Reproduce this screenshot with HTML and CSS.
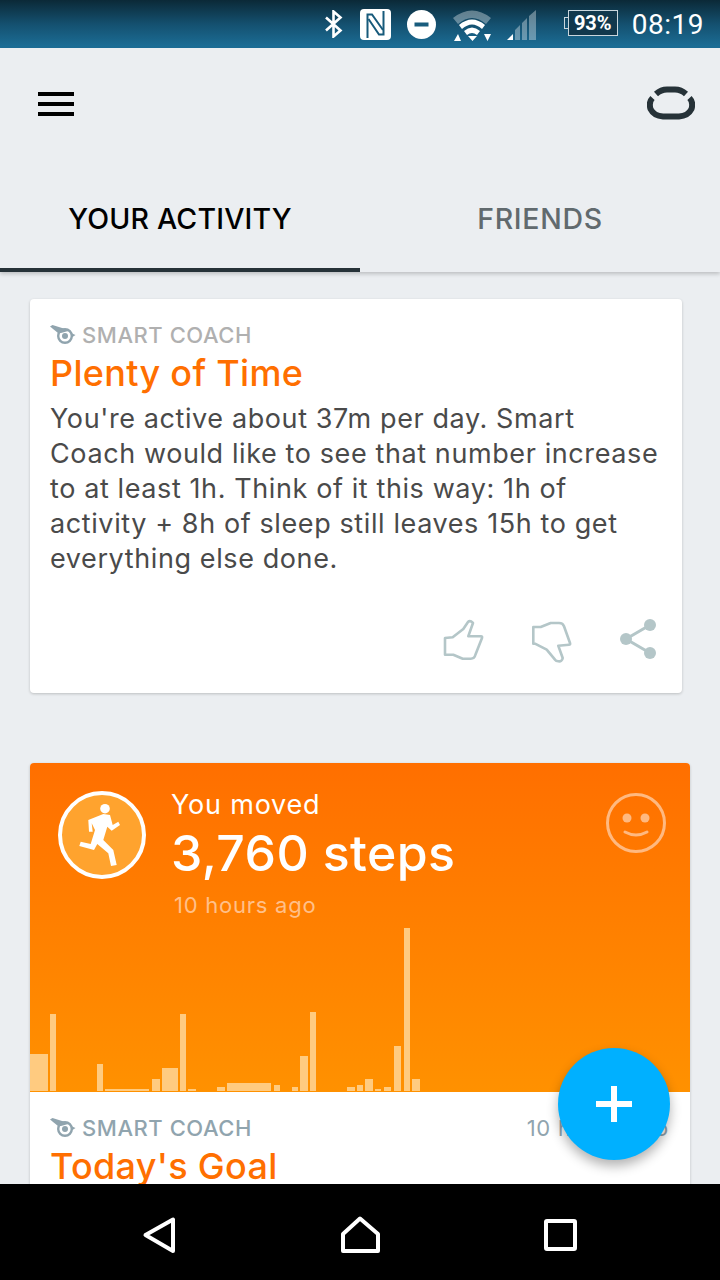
FILE: index.html
```html
<!DOCTYPE html>
<html lang="en">
<head>
  <meta charset="UTF-8">
  <meta name="viewport" content="width=device-width, initial-scale=1.0">
  <title>Your Activity</title>
  <link rel="stylesheet" href="styles.css">
</head>
<body>
  <div class="phone">
    <div class="status-bar">
      <svg class="st-bt" width="19" height="28" viewBox="0 0 19 28"><path d="M2 7.5 L16.5 20.5 L9.5 26.5 V1.5 L16.5 7.5 L2 20.5" fill="none" stroke="#fff" stroke-width="2.6"/></svg>
      <svg class="st-nfc" width="31" height="31" viewBox="0 0 31 31"><rect width="31" height="31" rx="4" fill="#fff"/><path d="M7.5 29 V5.5 H12 L23 21" fill="none" stroke="#175a7b" stroke-width="2"/><path d="M23.5 2 V25.5 H19 L8.5 10" fill="none" stroke="#175a7b" stroke-width="2"/></svg>
      <svg class="st-dnd" width="29" height="29" viewBox="0 0 29 29"><circle cx="14.5" cy="14.5" r="14.5" fill="#fff"/><rect x="7.5" y="12.5" width="14" height="4" fill="#185c7d"/></svg>
      <svg class="st-wifi" width="38" height="32" viewBox="0 0 38 32"><path d="M0 9 Q19 -6 38 9 L33 15 Q19 3 5 15 Z" fill="#fff" fill-opacity=".35"/><path d="M6 16 Q19 5 32 16 L29 20 Q19 11 9 20 Z" fill="#fff"/><path d="M11 22 Q19 15 27 22 L24 26 Q19 22 14 26 Z" fill="#fff"/><path d="M1 32 L5 25 L8 32 Z M15 27 H24 L19.5 32 Z M31 25 H38 L34.5 32 Z" fill="#fff"/></svg>
      <svg class="st-signal" width="30" height="30" viewBox="0 0 30 30"><path d="M8 30 V20 L13 15 V30 Z M15 30 V13 L20 8 V30 Z M22 30 V6 L29 0 V30 Z" fill="#fff" fill-opacity=".35"/><path d="M0 30 L6 24 V30 Z" fill="#fff"/></svg>
      <div class="battery"><span class="battery-nub"></span><span class="battery-text">93%</span></div>
      <span class="clock">08:19</span>
    </div>

    <header class="app-header">
      <div class="toolbar">
        <div class="burger"><span></span><span></span><span></span></div>
        <svg class="band" width="48" height="34" viewBox="0 0 48 34"><path d="M9 8 Q14 3.5 20 3.5 H28 Q34 3.5 39 8" fill="none" stroke="#263238" stroke-width="6"/><path d="M5.5 12 Q1.5 16 3.5 23 Q7 30 16 30.5 H32 Q41 30 44.5 23 Q46.5 16 42.5 12" fill="none" stroke="#263238" stroke-width="6"/></svg>
      </div>
      <nav class="tabs">
        <div class="tab active">YOUR ACTIVITY</div>
        <div class="tab">FRIENDS</div>
      </nav>
    </header>

    <main class="content">
      <section class="card coach-card">
        <div class="coach-label">
          <svg width="26" height="20" viewBox="0 0 26 20"><path d="M0 1.5 L2.5 0 L20 5.5 L11 8 L8 8 Z" fill="#90a4ae"/><circle cx="15" cy="11" r="6.8" fill="none" stroke="#90a4ae" stroke-width="2.4"/><circle cx="15" cy="11" r="3" fill="#90a4ae"/><path d="M21 8 L25.5 10 L21 13 Z" fill="#90a4ae"/></svg>
          <span>SMART COACH</span>
        </div>
        <h2 class="coach-title">Plenty of Time</h2>
        <p class="coach-text">You're active about 37m per day. Smart Coach would like to see that number increase to at least 1h. Think of it this way: 1h of activity + 8h of sleep still leaves 15h to get everything else done.</p>
        <div class="actions">
          <svg width="46" height="46" viewBox="0 0 46 46"><path d="M5 21 L12.7 20.3 L23.3 12 L28 5 Q30 3 33 6 L28.3 19.3 H41 Q42.5 19.3 42 21 L35.5 37.5 Q34.5 41.7 30.7 41.7 H22.7 L13.3 37.7 H5 Z" fill="none" stroke="#b4c6c8" stroke-width="2.6" stroke-linejoin="round"/></svg>
          <svg width="46" height="46" viewBox="0 0 46 46"><path d="M3.3 10 H10.7 L20.7 6 H29 Q33 6 34 9.3 L40 26 Q40.5 27.7 39 27.7 L28.3 28.7 L32.7 41 Q32 45 28.3 44.3 Q26 44 25 42.7 L16.7 32.7 L5 26.7 H3.3 Z" fill="none" stroke="#b4c6c8" stroke-width="2.6" stroke-linejoin="round"/></svg>
          <svg class="share" width="40" height="44" viewBox="0 0 40 44"><path d="M32 8 L8 22 L32 36" fill="none" stroke="#b4c6c8" stroke-width="3"/><circle cx="32" cy="8" r="6" fill="#b4c6c8"/><circle cx="8" cy="22" r="6" fill="#b4c6c8"/><circle cx="32" cy="36" r="6" fill="#b4c6c8"/></svg>
        </div>
      </section>

      <section class="card steps-card">
        <div class="steps-top">
          <div class="steps-head">
            <svg class="run-icon" width="88" height="88" viewBox="0 0 88 88">
              <circle cx="44" cy="44" r="42" fill="#ffa32e" stroke="#fff" stroke-width="4"/>
              <circle cx="47" cy="17.7" r="4.8" fill="#fff"/>
              <path d="M30.3 29 L45.3 23 L52 24 L54.7 34 L60.3 30.7 L62 34 L53.7 39.7 L49.3 35.7 L45.3 49 L55.3 59 L58.7 74 L53 75 L50.3 62.3 L39.3 53 L36 59 L21.3 55 L22.7 50.7 L32.7 53 L37 39 L33.7 32.3 L34.7 40.7 L31 40.7 Z" fill="#fff"/>
            </svg>
            <div class="steps-text">
              <div class="steps-intro">You moved</div>
              <div class="steps-count">3,760 steps</div>
              <div class="steps-time">10 hours ago</div>
            </div>
            <svg class="smiley" width="60" height="60" viewBox="0 0 60 60">
              <circle cx="30" cy="30" r="28.5" fill="none" stroke="#ffb980" stroke-width="3"/>
              <circle cx="21" cy="25" r="4.5" fill="#ffb980"/>
              <circle cx="39" cy="25" r="4.5" fill="#ffb980"/>
              <path d="M19 39 Q30 45 41 39" fill="none" stroke="#ffb980" stroke-width="3" stroke-linecap="round"/>
            </svg>
          </div>
          <svg class="chart" width="660" height="170" viewBox="0 0 660 170">
            <g fill="#ffcb80">
              <rect x="0" y="132" width="18" height="37"/>
              <rect x="20" y="92" width="6" height="77"/>
              <rect x="67" y="142" width="6" height="27"/>
              <rect x="75" y="167" width="44" height="2"/>
              <rect x="122" y="157" width="8" height="12"/>
              <rect x="132" y="146" width="16" height="23"/>
              <rect x="150" y="92" width="6" height="77"/>
              <rect x="158" y="167" width="8" height="2"/>
              <rect x="187" y="165" width="8" height="4"/>
              <rect x="197" y="161" width="44" height="8"/>
              <rect x="244" y="163" width="6" height="6"/>
              <rect x="262" y="165" width="6" height="4"/>
              <rect x="270" y="134" width="8" height="35"/>
              <rect x="280" y="90" width="6" height="79"/>
              <rect x="317" y="165" width="8" height="4"/>
              <rect x="327" y="163" width="6" height="6"/>
              <rect x="335" y="157" width="8" height="12"/>
              <rect x="345" y="167" width="6" height="2"/>
              <rect x="354" y="165" width="7" height="4"/>
              <rect x="364" y="124" width="7" height="45"/>
              <rect x="374" y="6" width="6" height="163"/>
              <rect x="382" y="157" width="8" height="12"/>
            </g>
          </svg>
        </div>
        <div class="steps-bottom">
          <div class="coach-label label-dark">
            <svg width="26" height="20" viewBox="0 0 26 20"><path d="M0 1.5 L2.5 0 L20 5.5 L11 8 L8 8 Z" fill="#90a4ae"/><circle cx="15" cy="11" r="6.8" fill="none" stroke="#90a4ae" stroke-width="2.4"/><circle cx="15" cy="11" r="3" fill="#90a4ae"/><path d="M21 8 L25.5 10 L21 13 Z" fill="#90a4ae"/></svg>
            <span>SMART COACH</span>
            <span class="coach-time">10 hours ago</span>
          </div>
          <h2 class="coach-title">Today's Goal</h2>
        </div>
      </section>

      <button class="fab"><svg width="36" height="36" viewBox="0 0 36 36"><path d="M18 0 V36 M0 18 H36" stroke="#fff" stroke-width="6"/></svg></button>
    </main>

    <footer class="nav-bar">
      <svg width="40" height="44" viewBox="0 0 40 44"><path d="M5.5 21 L33 5.5 V37 Z" fill="none" stroke="#fff" stroke-width="4" stroke-linejoin="round"/></svg>
      <svg width="40" height="44" viewBox="0 0 40 44"><path d="M20 4.5 L38 20 V37 H3 V20 Z" fill="none" stroke="#fff" stroke-width="4" stroke-linejoin="round"/></svg>
      <svg width="40" height="44" viewBox="0 0 40 44"><rect x="6" y="7" width="29" height="28" rx="1" fill="none" stroke="#fff" stroke-width="4"/></svg>
    </footer>
  </div>
</body>
</html>
```

FILE: styles.css
```css
/* General */
* {
  box-sizing: border-box;
}

body {
  margin: 0;
  font-family: Inter, 'Open Sans', sans-serif;
  background-color: #ebeef1;
}

.phone {
  width: 720px;
  height: 1280px;
  display: flex;
  flex-direction: column;
  overflow: hidden;
}

/* Status bar */
.status-bar {
  height: 48px;
  flex-shrink: 0;
  display: flex;
  align-items: center;
  padding-right: 16px;
  justify-content: flex-end;
  background: linear-gradient(#0b2937, #14506f 50%, #1c6f98);
  font-family: Roboto, sans-serif;
  color: #fff;
}

.st-bt {
  margin-right: 17px;
}

.st-nfc {
  margin-right: 16px;
}

.st-dnd {
  margin-right: 17px;
}

.st-wifi {
  margin-right: 16px;
  margin-top: 2px;
}

.st-signal {
  margin-right: 31px;
  margin-top: 2px;
}

.battery {
  position: relative;
  width: 50px;
  height: 26px;
  margin-right: 14px;
  margin-top: -3px;
  border: 1px solid #c9d6dd;
  background-color: #11384d;
  display: flex;
  align-items: center;
  justify-content: center;
}

.battery-nub {
  position: absolute;
  left: -5px;
  top: 6px;
  width: 4px;
  height: 12px;
  border: 1px solid #c9d6dd;
  border-right: none;
}

.battery-text {
  font-size: 20px;
  font-weight: 700;
}

.clock {
  font-size: 28px;
  letter-spacing: 0.5px;
}

/* Header */
.app-header {
  flex-shrink: 0;
  position: relative;
  z-index: 1;
  background-color: #ebeef1;
  box-shadow: 0 2px 4px rgba(0, 0, 0, 0.2);
}

.toolbar {
  height: 112px;
  display: flex;
  align-items: center;
  justify-content: space-between;
  padding: 0 25px 0 38px;
}

.burger {
  width: 36px;
  display: flex;
  flex-direction: column;
  gap: 6px;
  margin-top: -1px;
}

.burger span {
  height: 4px;
  background-color: #000;
}

.band {
  margin-top: -2px;
}

.tabs {
  height: 112px;
  display: flex;
}

.tab {
  width: 360px;
  padding-top: 43px;
  text-align: center;
  font-size: 28.5px;
  line-height: 32px;
  font-weight: 500;
  letter-spacing: 0.7px;
  color: #616a6e;
  border-bottom: 4px solid transparent;
}

.tab.active {
  color: #000;
  letter-spacing: 0.2px;
  border-bottom-color: #263238;
}

/* Cards */
.content {
  position: relative;
  flex: 1;
  min-height: 0;
  overflow: hidden;
  padding: 27px 30px 0;
}

.card {
  background-color: #fff;
  border-radius: 4px;
  box-shadow: 0 1px 3px rgba(0, 0, 0, 0.2);
}

.coach-card {
  width: 652px;
  height: 394px;
  padding: 24px 20px 30px 20px;
  margin-bottom: 70px;
  display: flex;
  flex-direction: column;
}

.coach-label {
  display: flex;
  align-items: center;
  gap: 6px;
  height: 24px;
  font-size: 22px;
  letter-spacing: 0.55px;
  font-weight: 500;
  color: #b0b0b0;
}

.label-dark {
  color: #90a4ae;
}

.coach-time {
  margin-left: auto;
  font-weight: 400;
  letter-spacing: 0.75px;
}

.coach-title {
  margin: 5px 0 0 0;
  font-size: 36px;
  line-height: 42px;
  letter-spacing: 0.3px;
  font-weight: 500;
  color: #ff6f00;
}

.coach-text {
  margin: 7px 0 0 0;
  font-size: 27px;
  line-height: 35px;
  letter-spacing: 0.6px;
  color: #4a4a4a;
}

.actions {
  display: flex;
  justify-content: flex-end;
  gap: 44px;
  margin-top: auto;
  margin-right: 4px;
}

.share {
  margin-left: -2px;
}

.steps-card {
  width: 660px;
}

.steps-top {
  height: 329px;
  display: flex;
  flex-direction: column;
  justify-content: space-between;
  border-radius: 4px 4px 0 0;
  background: linear-gradient(#ff6f00, #ff9100);
}

.steps-head {
  display: flex;
  padding: 28px 24px 0 28px;
}

.steps-text {
  margin-left: 25px;
  margin-top: -3px;
}

.steps-intro {
  font-size: 27px;
  line-height: 34px;
  letter-spacing: 0.8px;
  color: #fff;
}

.steps-count {
  font-size: 50px;
  line-height: 62px;
  letter-spacing: 0.4px;
  font-weight: 500;
  color: #fff;
}

.steps-time {
  margin: 6px 0 0 3px;
  font-size: 22px;
  line-height: 30px;
  letter-spacing: 0.75px;
  color: #ffc08a;
}

.smiley {
  margin-left: auto;
  margin-top: 2px;
}

.chart {
  display: block;
}

.steps-bottom {
  height: 110px;
  padding: 24px 21px 0 20px;
}

.fab {
  position: absolute;
  left: 558px;
  top: 776px;
  width: 112px;
  height: 112px;
  border: none;
  border-radius: 50%;
  padding: 0;
  display: flex;
  align-items: center;
  justify-content: center;
  background-color: #00b0ff;
  box-shadow: 0 6px 12px rgba(0, 0, 0, 0.3);
}

/* Navigation */
.nav-bar {
  height: 96px;
  flex-shrink: 0;
  display: flex;
  align-items: center;
  justify-content: space-between;
  padding: 8px 140px 0;
  background-color: #000;
}
```
